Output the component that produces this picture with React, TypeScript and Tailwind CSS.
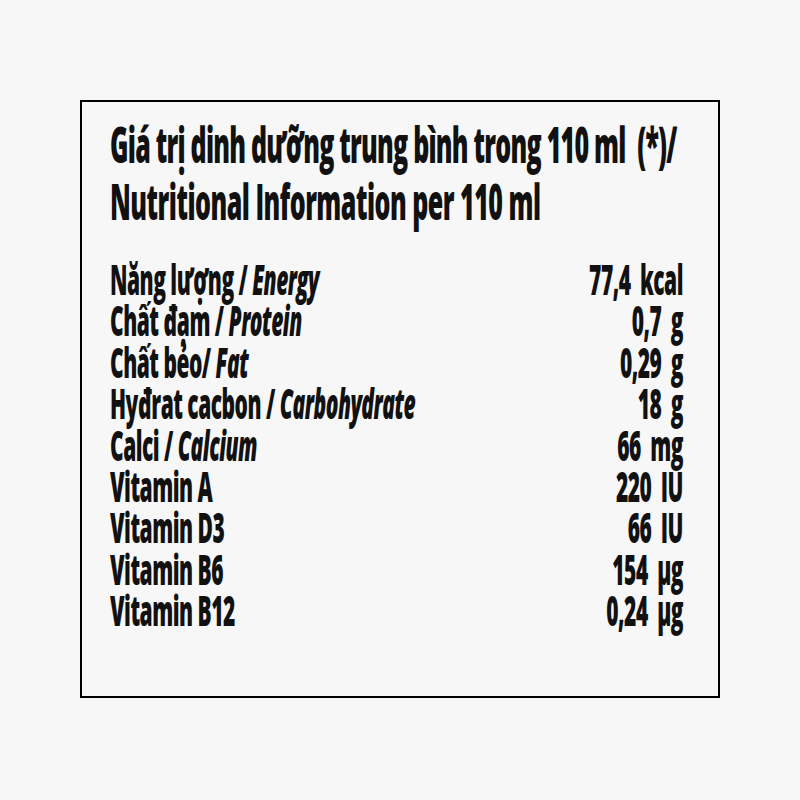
import React from 'react';

const rows: { vi: string; en?: string; value: string }[] = [
  { vi: 'Năng lượng / ', en: 'Energy', value: '77,4 kcal' },
  { vi: 'Chất đạm / ', en: 'Protein', value: '0,7 g' },
  { vi: 'Chất bẻo/ ', en: 'Fat', value: '0,29 g' },
  { vi: 'Hyđrat cacbon / ', en: 'Carbohydrate', value: '18 g' },
  { vi: 'Calci / ', en: 'Calcium', value: '66 mg' },
  { vi: 'Vitamin A', value: '220 IU' },
  { vi: 'Vitamin D3', value: '66 IU' },
  { vi: 'Vitamin B6', value: '154 µg' },
  { vi: 'Vitamin B12', value: '0,24 µg' },
];

export default function App() {
  return (
    <div
      className="w-[800px] h-[800px] bg-[#f6f6f6] pt-[100px] pl-[80px] text-[#111]"
      style={{ fontFamily: '"Open Sans", "Noto Sans", sans-serif' }}
    >
      <div className="w-[640px] h-[598px] border-2 border-black bg-[#f7f7f7] pl-[28px] pt-[14px] overflow-hidden">
        {/* condensed look: whole block drawn wide, then squeezed */}
        <div className="w-[1146px] origin-top-left scale-x-[0.5]">
          <div className="text-[50px] leading-[57px] font-extrabold tracking-[-1.5px] whitespace-nowrap">
            <div>Giá trị dinh dưỡng trung bình trong 110 ml&nbsp;&nbsp;(*)/</div>
            <div className="tracking-[-1px]">Nutritional Information per 110 ml</div>
          </div>

          <div className="mt-[28px] text-[42px] leading-[41.4px] font-extrabold tracking-[-1px]">
            {rows.map((r) => (
              <div key={r.vi} className="flex justify-between whitespace-nowrap">
                <span>
                  {r.vi}
                  {r.en && <i>{r.en}</i>}
                </span>
                <span className="[word-spacing:9px]">{r.value}</span>
              </div>
            ))}
          </div>
        </div>
      </div>
    </div>
  );
}
